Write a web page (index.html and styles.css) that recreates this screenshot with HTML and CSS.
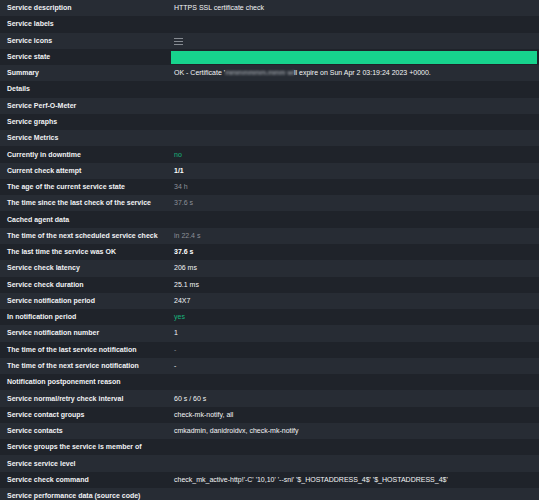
FILE: index.html
```html
<!DOCTYPE html>
<html lang="en">
<head>
<meta charset="utf-8">
<title>Service details</title>
<link rel="stylesheet" href="styles.css">
</head>
<body>
<div class="details">
  <div class="row"><div class="key">Service description</div><div class="val">HTTPS SSL certificate check</div></div>
  <div class="row"><div class="key">Service labels</div><div class="val"></div></div>
  <div class="row"><div class="key">Service icons</div><div class="val"><svg class="menu" width="9" height="7" viewBox="0 0 9 7"><rect x="0" y="0" width="9" height="1" /><rect x="0" y="3" width="9" height="1" /><rect x="0" y="6" width="9" height="1" /></svg></div></div>
  <div class="row"><div class="key">Service state</div><div class="val state"><div class="statebar"></div></div></div>
  <div class="row"><div class="key">Summary</div><div class="val">OK - Certificate '<span class="blur">mmmmmmm.mmm wi</span>ll expire on Sun Apr 2 03:19:24 2023 +0000.</div></div>
  <div class="row"><div class="key">Details</div><div class="val"></div></div>
  <div class="row"><div class="key">Service Perf-O-Meter</div><div class="val"></div></div>
  <div class="row"><div class="key">Service graphs</div><div class="val"></div></div>
  <div class="row"><div class="key">Service Metrics</div><div class="val"></div></div>
  <div class="row"><div class="key">Currently in downtime</div><div class="val green">no</div></div>
  <div class="row"><div class="key">Current check attempt</div><div class="val strong">1/1</div></div>
  <div class="row"><div class="key">The age of the current service state</div><div class="val muted">34 h</div></div>
  <div class="row"><div class="key">The time since the last check of the service</div><div class="val muted">37.6 s</div></div>
  <div class="row"><div class="key">Cached agent data</div><div class="val"></div></div>
  <div class="row"><div class="key">The time of the next scheduled service check</div><div class="val muted">in 22.4 s</div></div>
  <div class="row"><div class="key">The last time the service was OK</div><div class="val strong">37.6 s</div></div>
  <div class="row"><div class="key">Service check latency</div><div class="val">206 ms</div></div>
  <div class="row"><div class="key">Service check duration</div><div class="val">25.1 ms</div></div>
  <div class="row"><div class="key">Service notification period</div><div class="val">24X7</div></div>
  <div class="row"><div class="key">In notification period</div><div class="val green">yes</div></div>
  <div class="row"><div class="key">Service notification number</div><div class="val">1</div></div>
  <div class="row"><div class="key">The time of the last service notification</div><div class="val muted">-</div></div>
  <div class="row"><div class="key">The time of the next service notification</div><div class="val">-</div></div>
  <div class="row"><div class="key">Notification postponement reason</div><div class="val"></div></div>
  <div class="row"><div class="key">Service normal/retry check interval</div><div class="val">60 s / 60 s</div></div>
  <div class="row"><div class="key">Service contact groups</div><div class="val">check-mk-notify, all</div></div>
  <div class="row"><div class="key">Service contacts</div><div class="val">cmkadmin, danidroidvx, check-mk-notify</div></div>
  <div class="row"><div class="key">Service groups the service is member of</div><div class="val"></div></div>
  <div class="row"><div class="key">Service service level</div><div class="val"></div></div>
  <div class="row"><div class="key">Service check command</div><div class="val">check_mk_active-http!'-C' '10,10' '--sni' '$_HOSTADDRESS_4$' '$_HOSTADDRESS_4$'</div></div>
  <div class="row"><div class="key">Service performance data (source code)</div><div class="val"></div></div>
</div>
</body>
</html>
```

FILE: styles.css
```css
html {
  overflow: hidden;
  background: #1e2229;
}
body {
  margin: 0;
  background: #1e2229;
  font-family: "Liberation Sans", Arial, sans-serif;
  font-size: 7px;
  line-height: 10px;
  color: #eef0f2;
}
.details {
  display: flex;
  flex-direction: column;
}
.row {
  display: grid;
  grid-template-columns: 171px 1fr;
  height: 16.27px;
  align-items: center;
  background: #1f232a;
}
.row:nth-child(odd) {
  background: #272c34;
}
.key {
  padding-left: 7px;
  font-weight: bold;
  color: #f1f2f4;
  white-space: nowrap;
}
.val {
  padding-left: 3px;
  color: #f4f5f6;
  white-space: nowrap;
}
.val.state {
  padding-left: 0;
  height: 100%;
  display: flex;
  align-items: center;
}
.statebar {
  height: 13px;
  width: 366px;
  background: #17d38d;
  margin-top: 1px;
}
.menu {
  display: block;
  fill: #868b92;
  margin-top: 1px;
}
.green {
  color: #17b57c;
}
.muted {
  color: #8d9198;
}
.strong {
  font-weight: bold;
  color: #ffffff;
}
.blur {
  color: #b8bcc2;
  filter: blur(1.2px);
}
```
